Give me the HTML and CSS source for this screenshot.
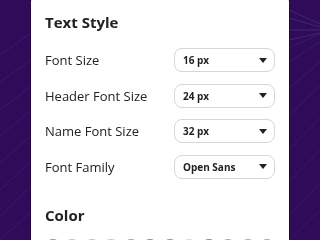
FILE: index.html
```html
<!DOCTYPE html>
<html>
<head>
<meta charset="utf-8">
<link rel="stylesheet" href="styles.css">
</head>
<body>
<svg class="bg" viewBox="0 0 320 240" width="320" height="240" aria-hidden="true">
  <g stroke="#5a3a9a" stroke-width="0.6" stroke-opacity="0.5" fill="none">
    <line x1="0" y1="55" x2="31" y2="33"/>
    <line x1="0" y1="82" x2="31" y2="60"/>
    <line x1="0" y1="110" x2="31" y2="86"/>
    <line x1="0" y1="136" x2="31" y2="110"/>
    <line x1="0" y1="163" x2="31" y2="136"/>
    <line x1="0" y1="190" x2="31" y2="161"/>
    <line x1="0" y1="217" x2="31" y2="186"/>
    <line x1="0" y1="240" x2="31" y2="212"/>
    <line x1="289" y1="48" x2="320" y2="34"/>
    <line x1="289" y1="62" x2="320" y2="42"/>
    <line x1="289" y1="88" x2="320" y2="62"/>
    <line x1="289" y1="115" x2="320" y2="86"/>
    <line x1="289" y1="150" x2="320" y2="118"/>
    <line x1="289" y1="182" x2="320" y2="150"/>
    <line x1="289" y1="215" x2="320" y2="183"/>
    <line x1="289" y1="240" x2="320" y2="210"/>
  </g>
  <g stroke="#4c6ab0" stroke-width="0.6" stroke-opacity="0.55" fill="none">
    <line x1="289" y1="10" x2="320" y2="24"/>
    <line x1="289" y1="18" x2="320" y2="27"/>
    <line x1="289" y1="30" x2="320" y2="30"/>
    <line x1="289" y1="40" x2="320" y2="33"/>
  </g>
</svg>
<div class="card">
  <h2 class="title">Text Style</h2>
  <div class="rows">
    <div class="row">
      <span class="label">Font Size</span>
      <div class="select"><span>16 px</span><i class="caret"></i></div>
    </div>
    <div class="row">
      <span class="label">Header Font Size</span>
      <div class="select"><span>24 px</span><i class="caret"></i></div>
    </div>
    <div class="row">
      <span class="label">Name Font Size</span>
      <div class="select"><span>32 px</span><i class="caret"></i></div>
    </div>
    <div class="row">
      <span class="label">Font Family</span>
      <div class="select"><span>Open Sans</span><i class="caret"></i></div>
    </div>
  </div>
  <h2 class="title color-title">Color</h2>
  <div class="swatches">
    <span class="sw" style="background:#e57373"></span>
    <span class="sw" style="background:#ffb74d"></span>
    <span class="sw" style="background:#aed581"></span>
    <span class="sw" style="background:#80deea"></span>
    <span class="sw" style="background:#64b5f6"></span>
    <span class="sw" style="background:#ba68c8"></span>
    <span class="sw" style="background:#f06292"></span>
    <span class="sw" style="background:#dce775"></span>
    <span class="sw" style="background:#7986cb"></span>
    <span class="sw" style="background:#ff8a65"></span>
    <span class="sw" style="background:#4dd0e1"></span>
    <span class="sw" style="background:#4fc3f7"></span>
  </div>
</div>
</body>
</html>
```

FILE: styles.css
```css
html, body {
  margin: 0;
  padding: 0;
  width: 320px;
  height: 240px;
  overflow: hidden;
  background: #300b5a;
  font-family: "Open Sans", "Noto Sans", sans-serif;
  color: #222;
}
.bg {
  position: fixed;
  left: 0;
  top: 0;
  z-index: 0;
}
.card {
  position: relative;
  z-index: 1;
  margin: -6px 0 0 31px;
  width: 258px;
  height: 246px;
  overflow: hidden;
  box-sizing: border-box;
  padding: 17px 14px 0 14px;
  background: #fff;
  border-radius: 8px 8px 0 0;
  box-shadow: 0 0 1px 1px rgba(0, 0, 0, 0.25);
}
.title {
  margin: 0;
  font-size: 15px;
  line-height: 22px;
  font-weight: 700;
  color: #222;
}
.rows {
  margin-top: 15px;
  display: flex;
  flex-direction: column;
  gap: 11.5px;
}
.row {
  display: flex;
  align-items: center;
  justify-content: space-between;
  height: 24px;
}
.label {
  font-size: 13px;
  color: #222;
}
.select {
  box-sizing: border-box;
  width: 101px;
  height: 24px;
  border: 1px solid #d6d6d6;
  border-radius: 8px;
  display: flex;
  align-items: center;
  justify-content: space-between;
  padding: 0 7px 0 8px;
  font-size: 10px;
  font-weight: 700;
  color: #222;
}
.caret {
  width: 0;
  height: 0;
  border-left: 4px solid transparent;
  border-right: 4px solid transparent;
  border-top: 5px solid #222;
}
.color-title {
  margin-top: 25px;
}
.swatches {
  margin-top: 13.5px;
  display: flex;
  justify-content: space-between;
}
.sw {
  width: 16px;
  height: 16px;
  border-radius: 50%;
}
```
